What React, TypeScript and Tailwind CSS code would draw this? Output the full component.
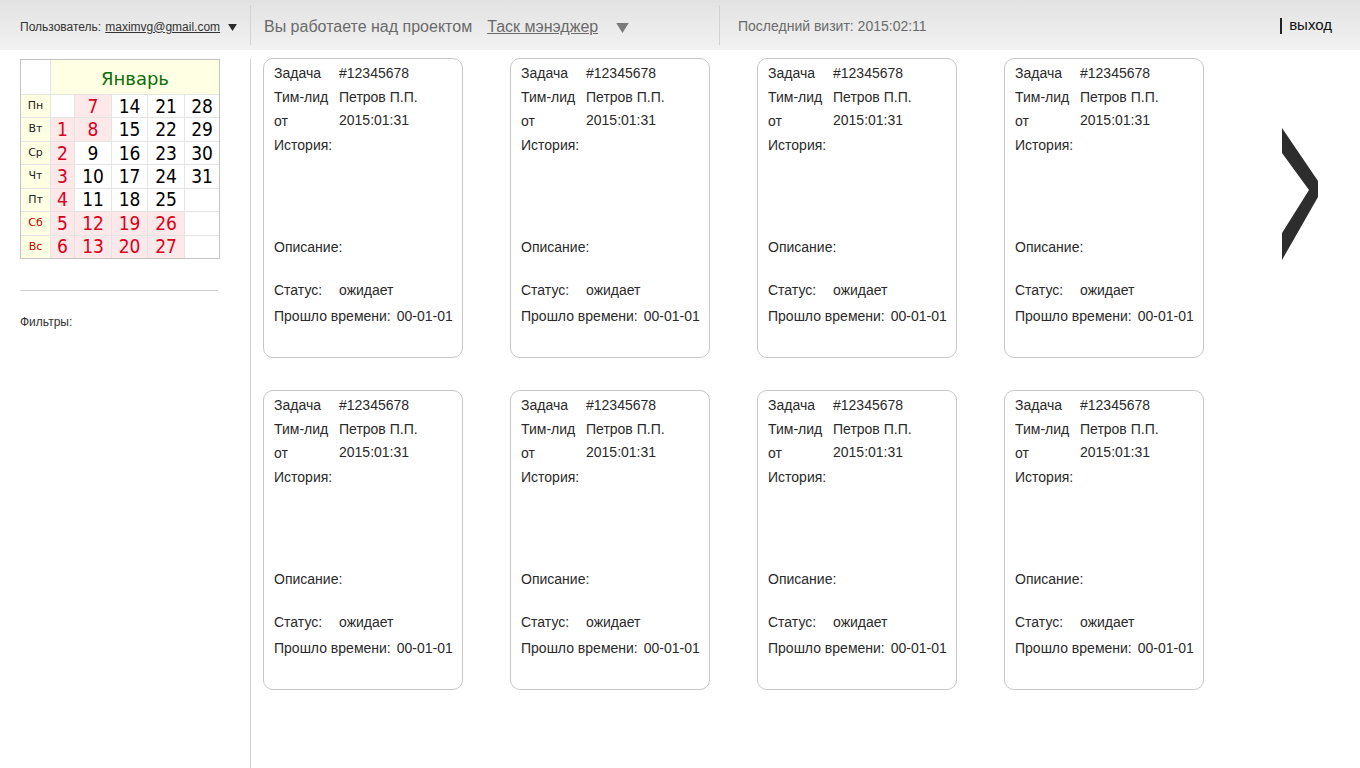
const calendar: { day: string; weekend: boolean; nums: (number | null)[] }[] = [
  { day: 'Пн', weekend: false, nums: [null, 7, 14, 21, 28] },
  { day: 'Вт', weekend: false, nums: [1, 8, 15, 22, 29] },
  { day: 'Ср', weekend: false, nums: [2, 9, 16, 23, 30] },
  { day: 'Чт', weekend: false, nums: [3, 10, 17, 24, 31] },
  { day: 'Пт', weekend: false, nums: [4, 11, 18, 25, null] },
  { day: 'Сб', weekend: true, nums: [5, 12, 19, 26, null] },
  { day: 'Вс', weekend: true, nums: [6, 13, 20, 27, null] },
]

function Calendar() {
  return (
    <div className="w-[200px] h-[200px] border border-[#c4c4c4] bg-[#e4e4e4] grid grid-cols-[29px_23px_36px_35px_36px_1fr] grid-rows-[34px_repeat(7,minmax(0,1fr))] gap-px font-['DejaVu_Sans',sans-serif]">
      <div className="bg-white" />
      <div className="col-span-5 bg-[#ffffe3] flex items-center justify-center text-[18px] text-[#0a6e0a] pt-[3px]">
        Январь
      </div>
      {calendar.map((row) => (
        <>
          <div
            key={row.day}
            className={`bg-[#ffffe3] flex items-center justify-center text-[11px] ${
              row.weekend ? 'text-[#c00000]' : 'text-[#222]'
            }`}
          >
            {row.day}
          </div>
          {row.nums.map((n, i) => {
            const red = n !== null && (n <= 8 || row.weekend)
            return (
              <div
                key={row.day + i}
                className={`flex items-center justify-center text-[19px] leading-none font-['DejaVu_Sans_Condensed','DejaVu_Sans',sans-serif] ${
                  red ? 'bg-[#fde9e9] text-[#d9001b]' : 'bg-white text-black'
                }`}
              >
                {n ?? ''}
              </div>
            )
          })}
        </>
      ))}
    </div>
  )
}

function TaskCard() {
  return (
    <div className="w-[200px] h-[300px] border border-[#c8c8c8] rounded-[10px] px-[10px] pt-[2px] text-[14px] text-[#2a2a2a] leading-[24px] whitespace-nowrap">
      <div className="flex">
        <span className="w-[65px]">Задача</span>
        <span>#12345678</span>
      </div>
      <div className="flex">
        <span className="w-[65px]">Тим-лид</span>
        <span>Петров П.П.</span>
      </div>
      <div className="flex">
        <span className="w-[65px]">от</span>
        <span className="-mt-px">2015:01:31</span>
      </div>
      <div>История:</div>
      <div className="mt-[78px]">Описание:</div>
      <div className="flex mt-[19px]">
        <span className="w-[65px]">Статус:</span>
        <span>ожидает</span>
      </div>
      <div className="flex gap-[6px] mt-[2px]">
        <span>Прошло времени:</span>
        <span>00-01-01</span>
      </div>
    </div>
  )
}

function Triangle({ cls }: { cls: string }) {
  return (
    <svg viewBox="0 0 10 8" className={cls}>
      <polygon points="0,0 10,0 5,8" fill="currentColor" />
    </svg>
  )
}

export default function App() {
  return (
    <div className="w-[1360px] h-[768px] bg-white overflow-hidden font-['Liberation_Sans',Arial,sans-serif]">
      <header className="h-[50px] flex items-center bg-gradient-to-b from-[#e2e2e2] to-[#f2f2f2]">
        <div className="w-[250px] pl-5 pt-[3px] flex items-center text-[12px] text-[#333]">
          <span>Пользователь:</span>
          <span className="ml-1 underline">maximvg@gmail.com</span>
          <Triangle cls="w-[9px] h-[7px] ml-[8px] mt-[2px] text-[#2a2a2a]" />
        </div>
        <div className="w-px h-[40px] bg-[#d2d2d2]" />
        <div className="w-[468px] pl-[13px] pt-[3px] flex items-center text-[16px] text-[#6a6a6a]">
          <span>Вы работаете над проектом</span>
          <span className="ml-[15px] underline">Таск мэнэджер</span>
          <Triangle cls="w-[13px] h-[10px] ml-[18px] mt-[2px] text-[#7a7a7a]" />
        </div>
        <div className="w-px h-[40px] bg-[#d2d2d2]" />
        <div className="pl-[18px] pt-[3px] text-[14px] text-[#6a6a6a] flex-1">Последний визит: 2015:02:11</div>
        <div className="pr-[28px] pt-[1px] text-[15px] text-[#111] flex items-center">
          <span className="w-[2px] h-[16px] bg-[#222] mr-[7px]" />
          <span>выход</span>
        </div>
      </header>

      <div className="flex h-[718px]">
        <aside className="w-[251px] border-r border-[#cfcfcf] mt-[9px] pl-5">
          <Calendar />
          <div className="w-[198px] h-px bg-[#cfcfcf] mt-[31px]" />
          <div className="mt-[22px] text-[12px] text-[#333]">Фильтры:</div>
        </aside>

        <main className="flex items-start pt-2 pl-3">
          <div className="grid grid-cols-[repeat(4,200px)] gap-x-[47px] gap-y-8">
            {Array.from({ length: 8 }).map((_, i) => (
              <TaskCard key={i} />
            ))}
          </div>
          <svg viewBox="0 0 36 132" className="w-[36px] h-[132px] ml-[78px] mt-[70px]">
            <polygon points="0,0 36,53 36,69 0,132 0,105 27,62 0,25" fill="#2d2d2d" />
          </svg>
        </main>
      </div>
    </div>
  )
}
